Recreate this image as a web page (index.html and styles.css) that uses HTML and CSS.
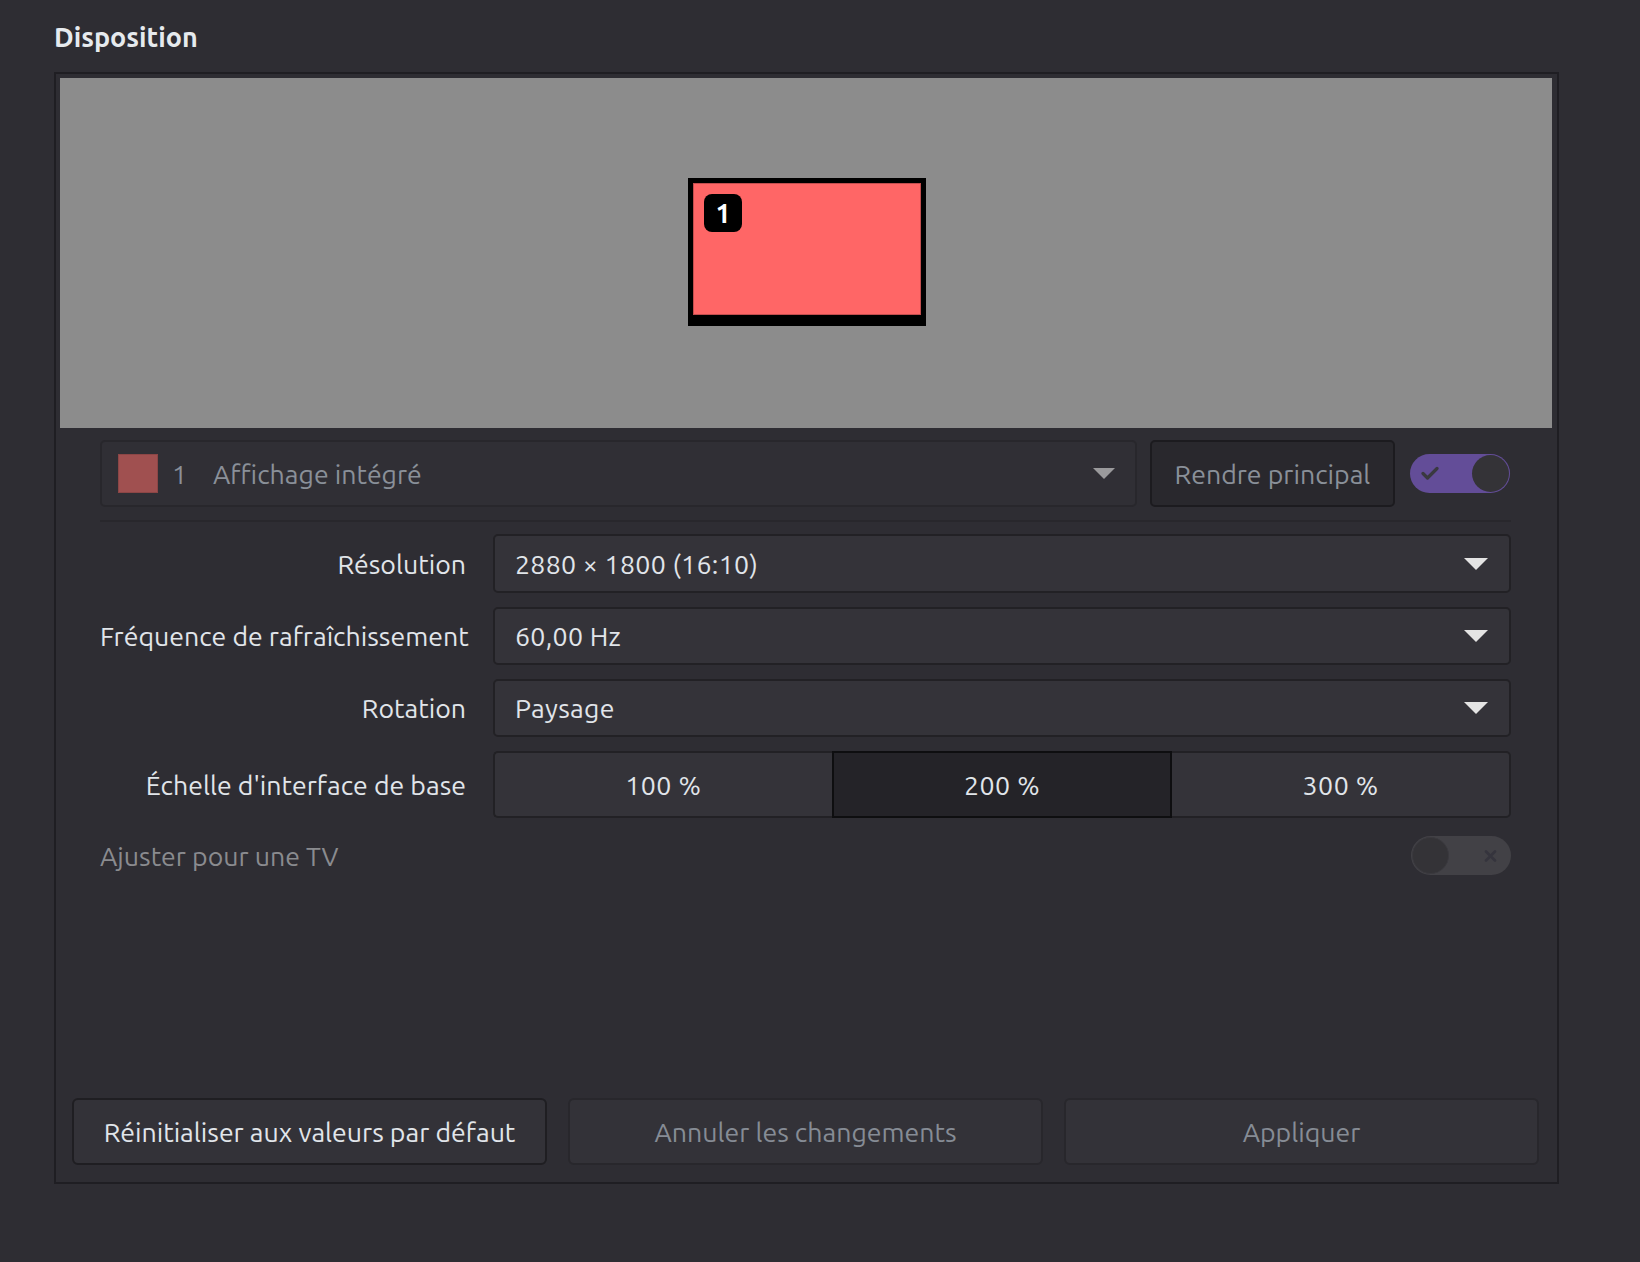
FILE: index.html
```html
<!DOCTYPE html>
<html lang="fr">
<head>
<meta charset="utf-8">
<title>Disposition</title>
<link rel="stylesheet" href="styles.css">
</head>
<body>
<div class="page">
  <h2 class="title">Disposition</h2>
  <div class="frame">
    <div class="preview">
      <div class="monitor"><span class="badge">1</span></div>
    </div>
    <div class="content">
      <div class="display-row">
        <div class="display-combo">
          <span class="swatch"></span>
          <span class="disp-num">1</span>
          <span class="disp-name">Affichage intégré</span>
          <span class="arrow arrow-dim"></span>
        </div>
        <button class="btn-primary">Rendre principal</button>
        <div class="switch switch-on">
          <svg class="check" width="18" height="14" viewBox="0 0 18 14"><path d="M2 7.5 L6.5 12 L16 2.5" fill="none" stroke="#3a3940" stroke-width="3.2" stroke-linecap="round" stroke-linejoin="round"/></svg>
          <span class="knob"></span>
        </div>
      </div>
      <div class="sep"></div>
      <div class="form">
        <div class="label">Résolution</div>
        <div class="combo"><span class="value">2880 × 1800 (16:10)</span><span class="arrow"></span></div>
        <div class="label">Fréquence de rafraîchissement</div>
        <div class="combo"><span class="value">60,00 Hz</span><span class="arrow"></span></div>
        <div class="label">Rotation</div>
        <div class="combo"><span class="value">Paysage</span><span class="arrow"></span></div>
        <div class="label">Échelle d'interface de base</div>
        <div class="segmented">
          <div class="seg seg-first">100 %</div>
          <div class="seg seg-active">200 %</div>
          <div class="seg seg-last">300 %</div>
        </div>
      </div>
      <div class="tv-row">
        <span class="tv-label">Ajuster pour une TV</span>
        <div class="switch switch-off">
          <span class="knob"></span>
          <svg class="cross" width="13" height="12" viewBox="0 0 13 12"><path d="M2 1.5 L11 10.5 M11 1.5 L2 10.5" fill="none" stroke="#35343d" stroke-width="2.6" stroke-linecap="round"/></svg>
        </div>
      </div>
    </div>
    <div class="actions">
      <button class="btn">Réinitialiser aux valeurs par défaut</button>
      <button class="btn btn-disabled">Annuler les changements</button>
      <button class="btn btn-disabled">Appliquer</button>
    </div>
  </div>
</div>
</body>
</html>
```
FILE: styles.css
```css
html, body {
  margin: 0;
  padding: 0;
  background: #2e2d33;
}
body {
  width: 1640px;
  height: 1262px;
  overflow: hidden;
  font-family: "Ubuntu", "Lato", "Noto Sans", sans-serif;
  font-size: 26.7px;
  color: #e1e5ea;
}
.page {
  padding: 21px 0 0 54px;
}
.title {
  margin: 0 0 19px 0;
  font-size: 27px;
  line-height: 32px;
  font-weight: 700;
  color: #e6eaee;
}
.frame {
  box-sizing: border-box;
  width: 1505px;
  height: 1112px;
  border: 2px solid #1f1e23;
  display: flex;
  flex-direction: column;
}
.preview {
  position: relative;
  height: 350px;
  margin: 4px 5px 0 4px;
  background: #8c8c8c;
}
.monitor {
  position: absolute;
  left: 628px;
  top: 100px;
  box-sizing: border-box;
  width: 238px;
  height: 148px;
  background: #ff6666;
  border: 5px solid #000;
  border-bottom-width: 11px;
  box-shadow: inset 0 0 0 1px #c24e4e;
}
.badge {
  position: absolute;
  left: 11px;
  top: 11px;
  width: 38px;
  height: 38px;
  border-radius: 8px;
  background: #000;
  color: #fff;
  font-weight: 700;
  font-size: 27px;
  line-height: 38px;
  text-align: center;
}
.content {
  padding: 12px 46px 0 44px;
}
.display-row {
  display: flex;
  align-items: center;
  height: 67px;
}
.display-combo {
  box-sizing: border-box;
  width: 1037px;
  height: 67px;
  display: flex;
  align-items: center;
  background: #302f35;
  border: 2px solid #28272c;
  border-radius: 5px;
  padding: 0 20px 0 16px;
  color: #8a9099;
}
.swatch {
  width: 40px;
  height: 39px;
  background: #a05050;
  box-shadow: inset 0 0 0 1px #8c4646;
}
.disp-num {
  margin-left: 14px;
  width: 41px;
}
.disp-name {
  flex: 1;
}
.arrow {
  width: 0;
  height: 0;
  border-left: 12px solid transparent;
  border-right: 12px solid transparent;
  border-top: 12px solid #e4e4e4;
}
.arrow-dim {
  border-top-color: #9a9a9c;
  border-left-width: 11px;
  border-right-width: 11px;
  border-top-width: 11px;
}
.btn-primary {
  box-sizing: border-box;
  margin-left: 13px;
  width: 245px;
  height: 67px;
  background: #29282d;
  border: 2px solid #1c1b1f;
  border-radius: 5px;
  font: inherit;
  color: #8a9099;
  padding: 0;
}
.switch {
  position: relative;
  box-sizing: border-box;
  width: 100px;
  height: 39px;
  border-radius: 20px;
}
.switch-on {
  margin-left: 15px;
  background: #634d98;
}
.switch-on .check {
  position: absolute;
  left: 11px;
  top: 12px;
}
.switch-on .knob {
  position: absolute;
  right: 1px;
  top: 1px;
  width: 37px;
  height: 37px;
  border-radius: 50%;
  background: #343337;
}
.sep {
  margin-top: 13px;
  height: 2px;
  background: #28272c;
}
.form {
  margin-top: 12px;
  display: grid;
  grid-template-columns: 366px 1fr;
  grid-template-rows: 59px 58px 58px 67px;
  column-gap: 27px;
  row-gap: 14px;
  align-items: center;
}
.label {
  text-align: right;
  white-space: nowrap;
}
.combo {
  box-sizing: border-box;
  height: 100%;
  display: flex;
  align-items: center;
  background: #343339;
  border: 2px solid #222125;
  border-radius: 5px;
  padding: 0 21px 0 20px;
}
.combo .value {
  flex: 1;
  letter-spacing: 0.3px;
}
.segmented {
  display: flex;
  height: 100%;
}
.seg {
  box-sizing: border-box;
  flex: 1;
  display: flex;
  align-items: center;
  justify-content: center;
  background: #343339;
  border: 2px solid #222125;
  letter-spacing: 0.5px;
}
.seg-first {
  border-radius: 5px 0 0 5px;
  border-right: none;
}
.seg-last {
  border-radius: 0 5px 5px 0;
  border-left: none;
}
.seg-active {
  background: #242328;
  border-color: #0e0e10;
}
.tv-row {
  margin-top: 18px;
  display: flex;
  align-items: center;
  justify-content: space-between;
  height: 39px;
}
.tv-label {
  color: #8a8b8f;
}
.switch-off {
  background: #424146;
}
.switch-off .knob {
  position: absolute;
  left: 1px;
  top: 1px;
  box-sizing: border-box;
  width: 37px;
  height: 37px;
  border-radius: 50%;
  background: #343337;
  border: 1px solid #3a393e;
}
.switch-off .cross {
  position: absolute;
  left: 73px;
  top: 14px;
}
.actions {
  margin-top: auto;
  display: flex;
  gap: 21px;
  padding: 0 18px 17px 16px;
}
.btn {
  box-sizing: border-box;
  flex: 1;
  height: 67px;
  background: #333238;
  border: 2px solid #1f1e22;
  border-radius: 6px;
  font: inherit;
  color: #e1e5ea;
  padding: 0;
}
.btn-disabled {
  border-color: #28272c;
  color: #868c95;
}
```
